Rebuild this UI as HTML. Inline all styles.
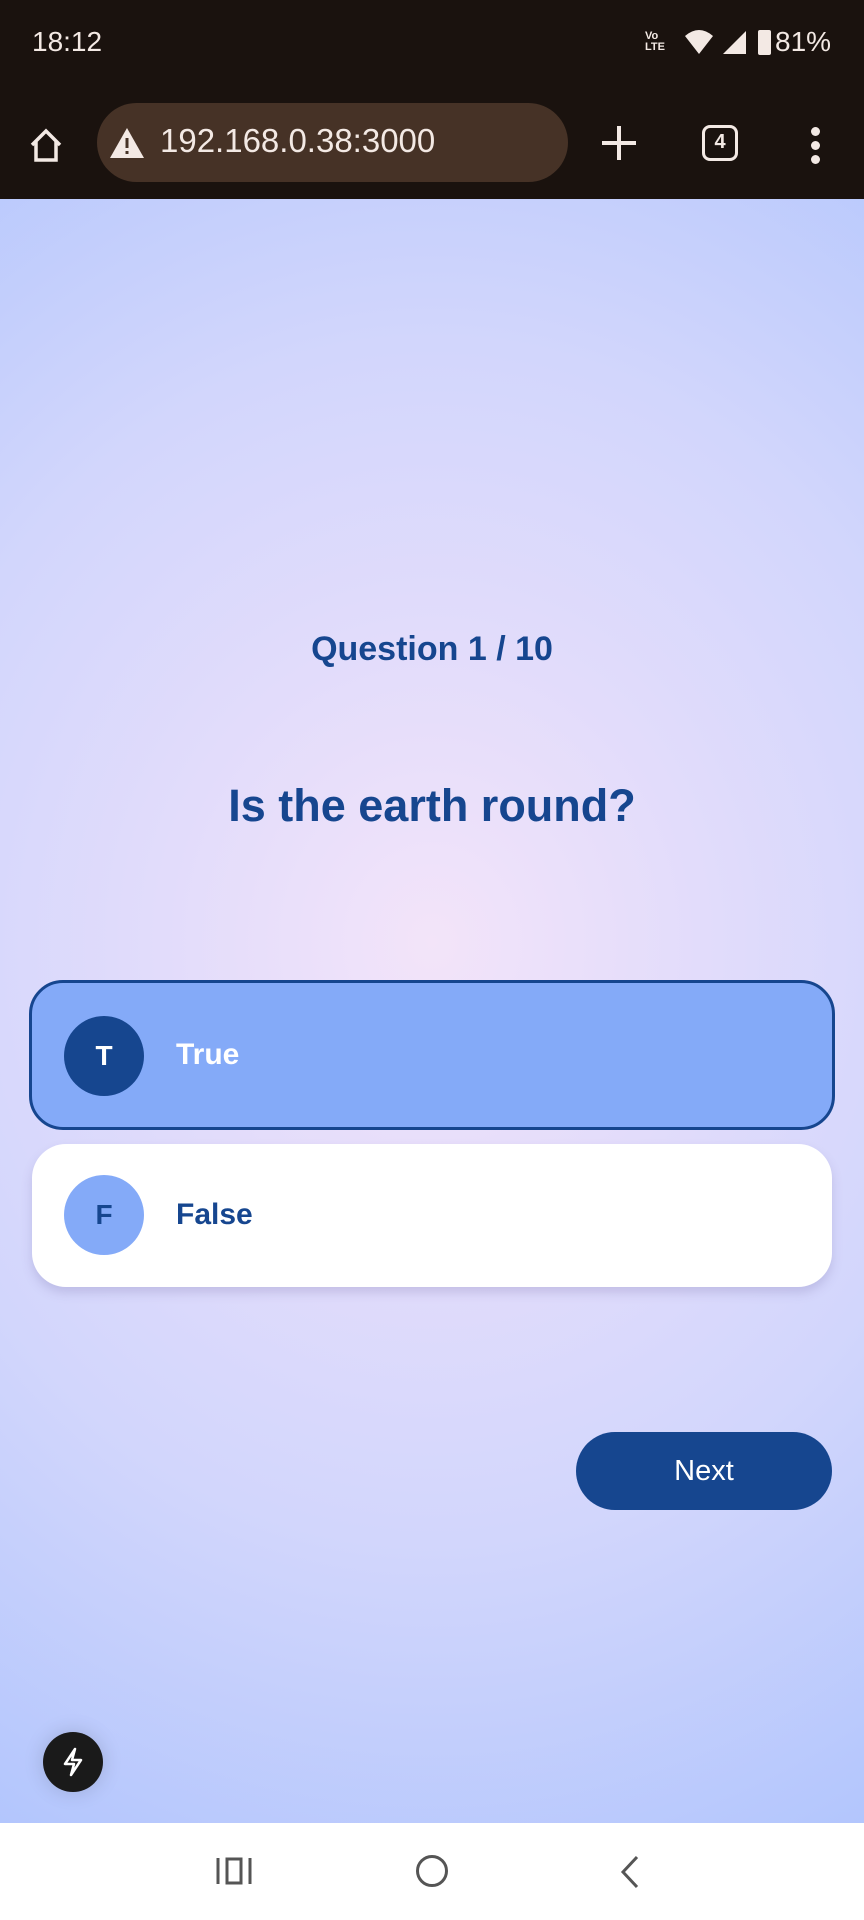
<!DOCTYPE html>
<html><head><meta charset="utf-8"><style>
*{margin:0;padding:0;box-sizing:border-box}
body{width:864px;height:1920px;overflow:hidden;font-family:"Liberation Sans",Roboto,sans-serif;position:relative;background:radial-gradient(ellipse 900px 1000px at 432px 942px,#f3e4f9 0%,#e2dcfb 30%,#d2d6fc 60%,#b3c6fd 100%)}
.top{position:absolute;left:0;top:0;width:864px;height:199px;background:#1a120e;color:#f3e9e4}
.time{position:absolute;left:32px;top:26px;font-size:28px}
.pill{position:absolute;left:97px;top:103px;width:471px;height:79px;border-radius:40px;background:#463226}
.url{position:absolute;left:160px;top:122px;font-size:33px;color:#f3e9e4}
.q{position:absolute;left:0;width:864px;text-align:center;color:#16468f;font-weight:bold}
.card{position:absolute;left:29px;width:806px;border-radius:34px}
.circ{position:absolute;left:64px;width:80px;height:80px;border-radius:50%;text-align:center;line-height:80px;font-weight:bold;font-size:28px}
.lbl{position:absolute;left:147px;font-size:30px;font-weight:bold}
.nav{position:absolute;left:0;top:1823px;width:864px;height:97px;background:#fff}
</style></head><body>
<div class="top">
<div class="time">18:12</div>
<div style="position:absolute;left:645px;top:31px;font-size:11px;line-height:11px;font-weight:bold">Vo<br>LTE</div>
<svg style="position:absolute;left:684px;top:30px" width="30" height="26"><path d="M1 6 Q15 -6 29 6 L15 24Z" fill="#f3e9e4"/></svg>
<svg style="position:absolute;left:722px;top:30px" width="26" height="26"><path d="M24 1 V24 H1Z" fill="#f3e9e4"/></svg>
<div style="position:absolute;left:758px;top:30px;width:13px;height:25px;background:#f3e9e4;border-radius:2px"></div>
<div style="position:absolute;left:775px;top:26px;font-size:28px">81%</div>
<svg style="position:absolute;left:28px;top:127px" width="36" height="36"><path d="M4 18 L18 4 L32 18 M8 14 V33 H28 V14" fill="none" stroke="#f3e9e4" stroke-width="3.5"/></svg>
<div class="pill"></div>
<svg style="position:absolute;left:109px;top:127px" width="36" height="32"><path d="M18 1 L35 31 H1Z" fill="#f3e9e4"/><rect x="16.5" y="11" width="3" height="10" fill="#463226"/><rect x="16.5" y="24" width="3" height="3" fill="#463226"/></svg>
<div class="url">192.168.0.38:3000</div>
<div style="position:absolute;left:602px;top:141px;width:34px;height:3.5px;background:#f3e9e4"></div>
<div style="position:absolute;left:617px;top:126px;width:3.5px;height:34px;background:#f3e9e4"></div>
<div style="position:absolute;left:702px;top:125px;width:36px;height:36px;border:3.5px solid #f3e9e4;border-radius:8px;text-align:center;font-size:20px;line-height:29px;font-weight:bold">4</div>
<div style="position:absolute;left:811px;top:127px;width:9px;height:9px;border-radius:50%;background:#f3e9e4;box-shadow:0 14px 0 #f3e9e4,0 28px 0 #f3e9e4"></div>
</div>
<div class="q" style="top:630px;font-size:34px">Question 1 / 10</div>
<div class="q" style="top:780px;font-size:45px">Is the earth round?</div>
<div class="card" style="top:980px;height:150px;background:#84aaf8;border:3px solid #16468f"></div>
<div class="circ" style="top:1016px;background:#16468f;color:#fff">T</div>
<div class="lbl" style="top:1038px;color:#fff;left:176px">True</div>
<div class="card" style="top:1144px;height:143px;left:32px;width:800px;background:#fff;box-shadow:0 6px 10px rgba(120,110,170,.25)"></div>
<div class="circ" style="top:1175px;background:#84aaf8;color:#16468f">F</div>
<div class="lbl" style="top:1198px;color:#16468f;left:176px">False</div>
<div style="position:absolute;left:576px;top:1432px;width:256px;height:78px;border-radius:39px;background:#16468f;color:#fff;text-align:center;line-height:78px;font-size:29px">Next</div>
<div style="position:absolute;left:43px;top:1732px;width:60px;height:60px;border-radius:50%;background:#1a1a1a;box-shadow:0 0 20px rgba(0,0,0,.15)"></div>
<svg style="position:absolute;left:58px;top:1746px" width="30" height="32"><path d="M17 3 L7 18 H16 L13 29 L23 14 H14Z" fill="none" stroke="#fff" stroke-width="2.5" stroke-linejoin="round"/></svg>
<div class="nav">
<svg style="position:absolute;left:216px;top:33px" width="36" height="30"><path d="M2 2 V28 M34 2 V28 M11 3 H25 V27 H11Z" fill="none" stroke="#555" stroke-width="3"/></svg>
<div style="position:absolute;left:416px;top:32px;width:32px;height:32px;border:3px solid #555;border-radius:50%"></div>
<svg style="position:absolute;left:618px;top:32px" width="24" height="34"><path d="M19 2 L5 17 L19 32" fill="none" stroke="#555" stroke-width="3"/></svg>
</div>
</body></html>
